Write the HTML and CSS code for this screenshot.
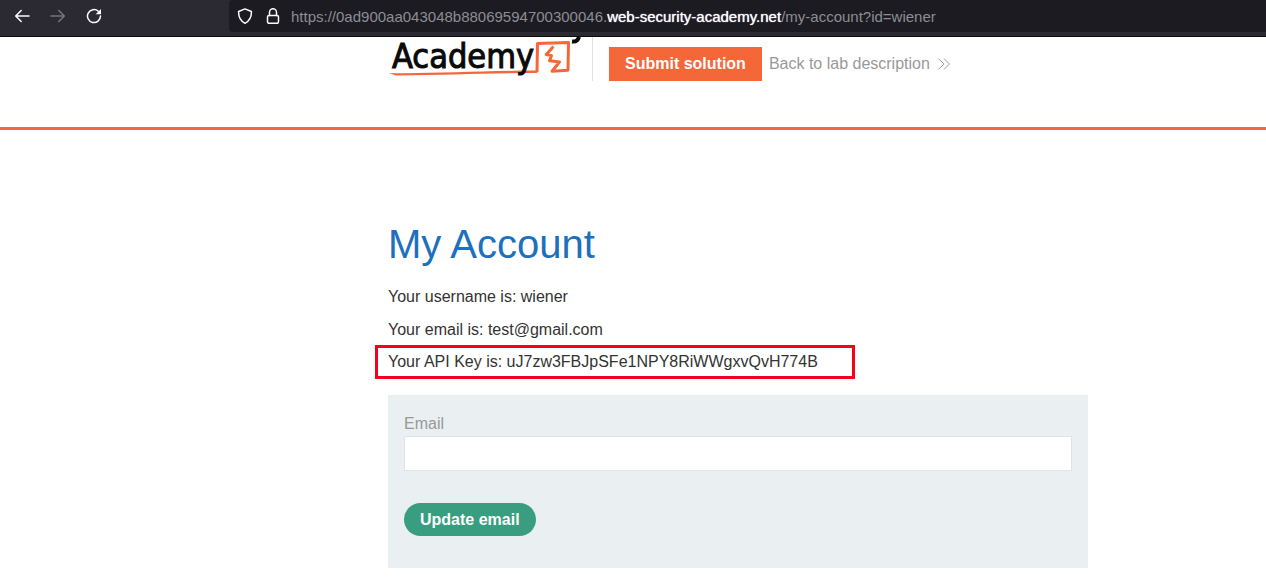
FILE: index.html
```html
<!DOCTYPE html>
<html lang="en">
<head>
<meta charset="utf-8">
<title>My Account</title>
<link rel="stylesheet" href="styles.css">
</head>
<body>
<div class="toolbar">
  <div class="nav">
    <button class="nav-btn" type="button" aria-label="Back">
      <svg width="16" height="16" viewBox="0 0 16 16"><path d="M15 8H1.8M7.2 2.5L1.7 8l5.5 5.500"/></svg>
    </button>
    <button class="nav-btn nav-btn-off" type="button" aria-label="Forward" disabled>
      <svg width="16" height="16" viewBox="0 0 16 16"><path d="M1 8h13.200M8.800 2.500L14.300 8l-5.500 5.500"/></svg>
    </button>
    <button class="nav-btn" type="button" aria-label="Reload">
      <svg width="16" height="16" viewBox="0 0 16 16"><path d="M12.300 3.200A6.500 6.500 0 1 0 14.500 8"/><path class="solid" d="M15 1v5.300H9.700z"/></svg>
    </button>
  </div>
  <div class="address">
    <svg width="16" height="16" viewBox="0 0 16 16"><path d="M8 .9L14.400 3.500C14.600 8.800 12.400 13 8 15.300 3.600 13 1.400 8.800 1.600 3.500z"/></svg>
    <svg width="16" height="16" viewBox="0 0 16 16"><rect x="2.500" y="7.500" width="11" height="7.800" rx="1.500"/><path d="M4.500 7.500V4.200a3.500 3.500 0 0 1 7 0v3.300"/></svg>
    <span class="url">https://0ad900aa043048b88069594700300046.<b>web-security-academy.net</b>/my-account?id=wiener</span>
  </div>
</div>
<header class="header">
  <a class="logo" href="#" aria-label="Academy home">
    <svg width="196" height="44" viewBox="0 0 196 44">
      <path class="mark" d="M149 35.200L149.500 6.500L180.500 5.600L180 33.300L164 34.200L171.500 25L161.500 23.800L163.500 18.600L158.200 17.500L165.500 9.500"/>
      <path class="underline" d="M1 36C40 37 100 33.500 149 33.600V36C100 36 60 37.800 8 38.500z"/>
      <text x="4" y="31">Academy</text>
      <path class="tail" d="M184 4.500C188 5 190 3.500 191 0"/>
    </svg>
  </a>
  <div class="actions">
    <button class="submit" type="button">Submit solution</button>
    <a class="back" href="#">Back to lab description
      <svg width="12" height="12" viewBox="0 0 12 12"><path d="M.5.500L6 6 .5 11.500M6 .5L11.500 6 6 11.500"/></svg>
    </a>
  </div>
</header>
<main class="content">
  <h1>My Account</h1>
  <p>Your username is: wiener</p>
  <p>Your email is: test@gmail.com</p>
  <p class="marked">Your API Key is: uJ7zw3FBJpSFe1NPY8RiWWgxvQvH774B</p>
  <form class="form">
    <label for="email">Email</label>
    <input id="email" type="email">
    <button class="update" type="button">Update email</button>
  </form>
</main>
</body>
</html>
```
FILE: styles.css
```css
* { box-sizing: border-box; }
body {
  margin: 0;
  background: #fff;
  color: #333332;
  font: 16px/20px "Liberation Sans", Arial, sans-serif;
}
button { border: 0; font: inherit; }
.toolbar {
  display: flex;
  justify-content: space-between;
  background: #2b2a33;
  border-bottom: 1px solid #0c0c0d;
}
.nav { display: flex; align-items: center; gap: 20px; padding: 0 0 4px 14px; }
.nav-btn { display: flex; padding: 0; background: none; color: #fbfbfe; }
.nav-btn-off { color: #77767d; }
.toolbar svg {
  flex: none;
  fill: none;
  stroke: currentColor;
  stroke-width: 1.5;
  stroke-linecap: round;
  stroke-linejoin: round;
}
.toolbar .solid { fill: currentColor; stroke: none; }
.address {
  display: flex;
  align-items: center;
  gap: 12px;
  flex: 1;
  margin: 0 0 4px 127px;
  padding: 0 8px;
  height: 32px;
  border-radius: 4px 0 0 4px;
  background: #1c1b22;
  color: #fbfbfe;
}
.url {
  padding-top: 2px;
  white-space: nowrap;
  color: #8d8d93;
  font-size: 15px;
}
.address svg + .url { margin-left: -2px; }
.url b { color: #fbfbfe; font-weight: 400; text-shadow: 0 0 1px #fbfbfe; }
.header {
  display: flex;
  align-items: flex-start;
  padding: 0 16px 46px 388px;
  border-bottom: 3px solid #f46739;
}
.logo { display: flex; }
.logo svg { overflow: visible; }
.logo text {
  font: 400 34px "DejaVu Sans Condensed", "DejaVu Sans", sans-serif;
  fill: #0a0a0a;
  stroke: #0a0a0a;
  stroke-width: 1;
}
.mark { fill: none; stroke: #f46739; stroke-width: 3; stroke-linejoin: round; }
.underline { fill: #f46739; }
.tail { fill: none; stroke: #0a0a0a; stroke-width: 4; }
.actions {
  display: flex;
  align-items: center;
  gap: 7px;
  margin-left: 8px;
  padding: 10px 0 0 16px;
  border-left: 1px solid #e0e0e0;
}
.submit {
  padding: 7px 16px;
  background: #f46739;
  color: #fff;
  font-weight: 700;
}
.back {
  display: flex;
  align-items: center;
  gap: 8px;
  color: #999;
  text-decoration: none;
}
.back svg { fill: none; stroke: #999; stroke-width: 1; }
.content { max-width: 1088px; padding: 91px 0 9px 388px; }
h1 { margin: 0 0 20px; color: #1d70bd; font-size: 40px; font-weight: 400; line-height: 46px; }
p { margin: 0 0 13px; }
.marked {
  width: fit-content;
  margin: -8px 0 16px -13px;
  padding: 4px 34px 4px 10px;
  border: 3px solid #f5001f;
}
.form {
  display: flex;
  flex-direction: column;
  align-items: flex-start;
  padding: 19px 16px 32px;
  background: #eaeff2;
  color: #999;
}
label { margin-bottom: 2px; }
input {
  width: 100%;
  height: 35px;
  padding: 0 8px;
  border: 1px solid #e0e4e4;
  background: #fff;
  font: inherit;
}
.update {
  margin-top: 32px;
  padding: 7px 16px 6px;
  border-radius: 17px;
  background: #389e7f;
  color: #fff;
  font-weight: 700;
}
```
